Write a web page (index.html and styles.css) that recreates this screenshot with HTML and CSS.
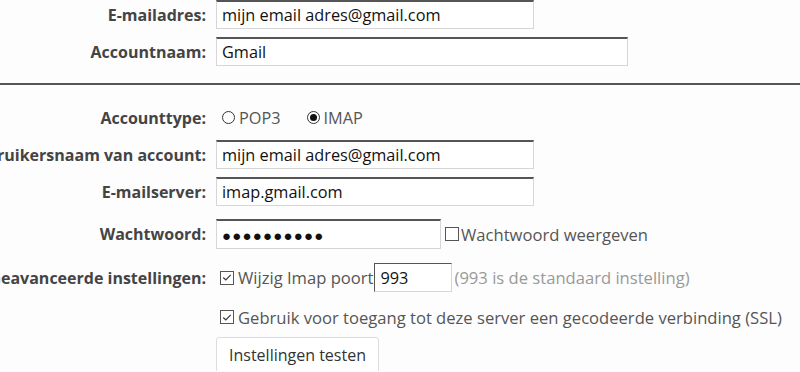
FILE: index.html
```html
<!DOCTYPE html>
<html lang="nl">
<head>
<meta charset="utf-8">
<link rel="stylesheet" href="styles.css">
</head>
<body>
<div class="form">
  <div class="row r1">
    <div class="label">E-mailadres:</div>
    <div class="field"><input class="text w318" type="text" value="mijn email adres@gmail.com"></div>
  </div>
  <div class="row r2">
    <div class="label">Accountnaam:</div>
    <div class="field"><input class="text w412" type="text" value="Gmail"></div>
  </div>
  <div class="sep"></div>
  <div class="row r3">
    <div class="label">Accounttype:</div>
    <div class="field opts">
      <span class="opt"><span class="radio"></span>POP3</span>
      <span class="opt"><span class="radio on"></span>IMAP</span>
    </div>
  </div>
  <div class="row r4">
    <div class="label">Gebruikersnaam van account:</div>
    <div class="field"><input class="text w318" type="text" value="mijn email adres@gmail.com"></div>
  </div>
  <div class="row r5">
    <div class="label">E-mailserver:</div>
    <div class="field"><input class="text w318" type="text" value="imap.gmail.com"></div>
  </div>
  <div class="row r6">
    <div class="label">Wachtwoord:</div>
    <div class="field">
      <input class="text w225 pw" type="text" value="●●●●●●●●●●">
      <span class="cb"></span><span class="cblabel">Wachtwoord weergeven</span>
    </div>
  </div>
  <div class="row r7">
    <div class="label">Geavanceerde instellingen:</div>
    <div class="field">
      <span class="cb on"><svg viewBox="0 0 13 13" width="13" height="13"><path d="M2.5 6.5 L5.2 9.2 L10.5 3.6" fill="none" stroke="#333" stroke-width="1.2"/></svg></span><span class="cblabel">Wijzig Imap poort</span><input class="text port" type="text" value="993"><span class="hint">(993 is de standaard instelling)</span>
    </div>
  </div>
  <div class="row r8">
    <div class="label"></div>
    <div class="field">
      <span class="cb on"><svg viewBox="0 0 13 13" width="13" height="13"><path d="M2.5 6.5 L5.2 9.2 L10.5 3.6" fill="none" stroke="#333" stroke-width="1.2"/></svg></span><span class="cblabel">Gebruik voor toegang tot deze server een gecodeerde verbinding (SSL)</span>
    </div>
  </div>
  <div class="row r9">
    <div class="label"></div>
    <div class="field"><button class="btn" type="button">Instellingen testen</button></div>
  </div>
</div>
</body>
</html>
```

FILE: styles.css
```css
html, body {
  margin: 0;
  padding: 0;
  background: #fdfdfd;
  overflow: hidden;
}
body {
  font-family: "Open Sans", "Noto Sans", sans-serif;
  font-size: 16px;
  color: #444;
}
.form {
  display: flex;
  flex-direction: column;
  width: 800px;
}
.row {
  display: grid;
  grid-template-columns: 206px 1fr;
  column-gap: 10px;
  align-items: center;
}
.label {
  display: flex;
  justify-content: flex-end;
  white-space: nowrap;
  font-weight: 700;
  color: #444;
}
.field {
  display: flex;
  align-items: center;
  white-space: nowrap;
}
.text {
  box-sizing: border-box;
  height: 29px;
  margin: 0;
  padding: 0 5px;
  font-family: inherit;
  font-size: 16.3px;
  color: #111;
  background: #fff;
  border: 1px solid #d6d6d6;
  border-top: 2px solid #555;
  outline: none;
}
.w318 { width: 318px; }
.w412 { width: 412px; }
.w225 { width: 225px; height: 30px; }
.pw { letter-spacing: 1.2px; font-size: 15px; }
.r1 { height: 29px; margin-top: 0; }
.r2 { height: 29px; margin-top: 8px; }
.sep {
  height: 2px;
  background: #555;
  margin-top: 17px;
}
.r3 { height: 29px; margin-top: 18px; }
.r4 { height: 29px; margin-top: 8px; }
.r5 { height: 29px; margin-top: 8px; }
.r6 { height: 30px; margin-top: 13px; }
.r7 { height: 29px; margin-top: 14px; }
.r8 { height: 26px; margin-top: 12px; }
.r9 { height: 34px; margin-top: 7px; align-items: start; }
.opts { gap: 20px; }
.opt {
  display: inline-flex;
  align-items: center;
  color: #555;
  font-size: 16.3px;
}
.radio {
  box-sizing: border-box;
  width: 13px;
  height: 13px;
  border: 1px solid #333;
  border-radius: 50%;
  margin: 0 4px 0 6px;
  background: #fff;
  display: inline-flex;
  align-items: center;
  justify-content: center;
}
.radio.on::after {
  content: "";
  width: 7px;
  height: 7px;
  border-radius: 50%;
  background: #111;
}
.cb {
  box-sizing: border-box;
  width: 14px;
  height: 14px;
  border: 1px solid #555;
  background: #fff;
  display: inline-flex;
  align-items: center;
  justify-content: center;
  margin-left: 4px;
  margin-right: 2px;
}
.cb svg { display: block; }
.cb.on { margin-right: 4px; }
.cblabel { color: #555; font-size: 16.6px; }
.port {
  width: 78px;
  margin-left: 1px;
  border-top: 1px solid #555;
  border-left: 1px solid #555;
}
.hint { color: #999; margin-left: 2px; font-size: 16.6px; }
.btn {
  height: 36px;
  padding: 0 12px;
  font-family: inherit;
  font-size: 16px;
  color: #333;
  background: #fff;
  border: 1px solid #ddd;
  border-radius: 3px;
}
```
